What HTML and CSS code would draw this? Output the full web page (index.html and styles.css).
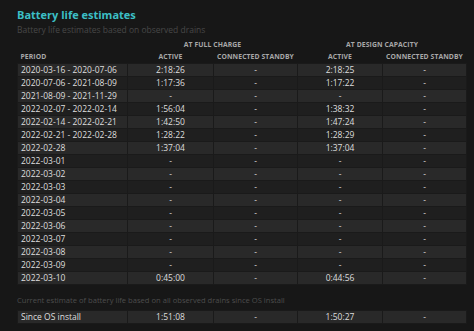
FILE: index.html
```html
<!DOCTYPE html>
<html>
<head>
<meta charset="utf-8">
<link rel="stylesheet" href="styles.css">
</head>
<body>
<div class="page">
  <h1 class="title">Battery life estimates</h1>
  <div class="subtitle">Battery life estimates based on observed drains</div>
  <table class="grid">
    <colgroup>
      <col class="c-period"><col class="c-a"><col class="c-b"><col class="c-c"><col class="c-d">
    </colgroup>
    <thead>
      <tr class="group">
        <th></th><th colspan="2">AT FULL CHARGE</th><th colspan="2">AT DESIGN CAPACITY</th>
      </tr>
      <tr class="cols">
        <th class="left">PERIOD</th><th>ACTIVE</th><th>CONNECTED STANDBY</th><th>ACTIVE</th><th>CONNECTED STANDBY</th>
      </tr>
    </thead>
    <tbody>
      <tr><td class="left">2020-03-16 - 2020-07-06</td><td>2:18:26</td><td>-</td><td>2:18:25</td><td>-</td></tr>
      <tr><td class="left">2020-07-06 - 2021-08-09</td><td>1:17:36</td><td>-</td><td>1:17:22</td><td>-</td></tr>
      <tr><td class="left">2021-08-09 - 2021-11-29</td><td>-</td><td>-</td><td>-</td><td>-</td></tr>
      <tr><td class="left">2022-02-07 - 2022-02-14</td><td>1:56:04</td><td>-</td><td>1:38:32</td><td>-</td></tr>
      <tr><td class="left">2022-02-14 - 2022-02-21</td><td>1:42:50</td><td>-</td><td>1:47:24</td><td>-</td></tr>
      <tr><td class="left">2022-02-21 - 2022-02-28</td><td>1:28:22</td><td>-</td><td>1:28:29</td><td>-</td></tr>
      <tr><td class="left">2022-02-28</td><td>1:37:04</td><td>-</td><td>1:37:04</td><td>-</td></tr>
      <tr><td class="left">2022-03-01</td><td>-</td><td>-</td><td>-</td><td>-</td></tr>
      <tr><td class="left">2022-03-02</td><td>-</td><td>-</td><td>-</td><td>-</td></tr>
      <tr><td class="left">2022-03-03</td><td>-</td><td>-</td><td>-</td><td>-</td></tr>
      <tr><td class="left">2022-03-04</td><td>-</td><td>-</td><td>-</td><td>-</td></tr>
      <tr><td class="left">2022-03-05</td><td>-</td><td>-</td><td>-</td><td>-</td></tr>
      <tr><td class="left">2022-03-06</td><td>-</td><td>-</td><td>-</td><td>-</td></tr>
      <tr><td class="left">2022-03-07</td><td>-</td><td>-</td><td>-</td><td>-</td></tr>
      <tr><td class="left">2022-03-08</td><td>-</td><td>-</td><td>-</td><td>-</td></tr>
      <tr><td class="left">2022-03-09</td><td>-</td><td>-</td><td>-</td><td>-</td></tr>
      <tr><td class="left">2022-03-10</td><td>0:45:00</td><td>-</td><td>0:44:56</td><td>-</td></tr>
    </tbody>
  </table>
  <div class="note">Current estimate of battery life based on all observed drains since OS install</div>
  <table class="grid">
    <colgroup>
      <col class="c-period"><col class="c-a"><col class="c-b"><col class="c-c"><col class="c-d">
    </colgroup>
    <tbody>
      <tr><td class="left">Since OS install</td><td>1:51:08</td><td>-</td><td>1:50:27</td><td>-</td></tr>
    </tbody>
  </table>
</div>
</body>
</html>
```
FILE: styles.css
```css
html, body {
  margin: 0;
  padding: 0;
  background: #171717;
  height: 100%;
}
body {
  font-family: "Open Sans", "Noto Sans", sans-serif;
  color: #dcdcdc;
  overflow: hidden;
}
.page {
  padding: 6px 8px 0 17px;
  width: 449px;
}
.title {
  margin: 0;
  font-size: 11px;
  font-weight: 700;
  line-height: 18px;
  color: #3cbfc6;
}
.subtitle {
  font-size: 8.5px;
  line-height: 12px;
  color: #474747;
  margin-bottom: 3px;
}
.grid {
  width: 449px;
  border-collapse: collapse;
  table-layout: fixed;
}
.c-period { width: 110px; }
.c-a { width: 86px; }
.c-b { width: 84px; }
.c-c { width: 85px; }
.c-d { width: 84px; }
.grid th {
  font-size: 6.8px;
  font-weight: 700;
  color: #a8a8a8;
  text-align: center;
  height: 12px;
  line-height: 12px;
  padding: 0;
  white-space: nowrap;
  letter-spacing: 0.1px;
}
.grid th.left { text-align: left; padding-left: 3px; }
.grid td {
  font-size: 8.5px;
  height: 12px;
  line-height: 12px;
  padding: 0;
  text-align: center;
  border: 1px solid #1a1a1a;
  color: #dedede;
  white-space: nowrap;
  overflow: hidden;
}
.grid td.left { text-align: left; padding-left: 3px; }
.grid tbody tr:nth-child(odd) td { background: #292929; }
.grid tbody tr:nth-child(even) td { background: #1f1f1f; }
.note {
  font-size: 7.6px;
  color: #4d4d4d;
  line-height: 12px;
  margin: 9px 0 4px;
  white-space: nowrap;
}
```
